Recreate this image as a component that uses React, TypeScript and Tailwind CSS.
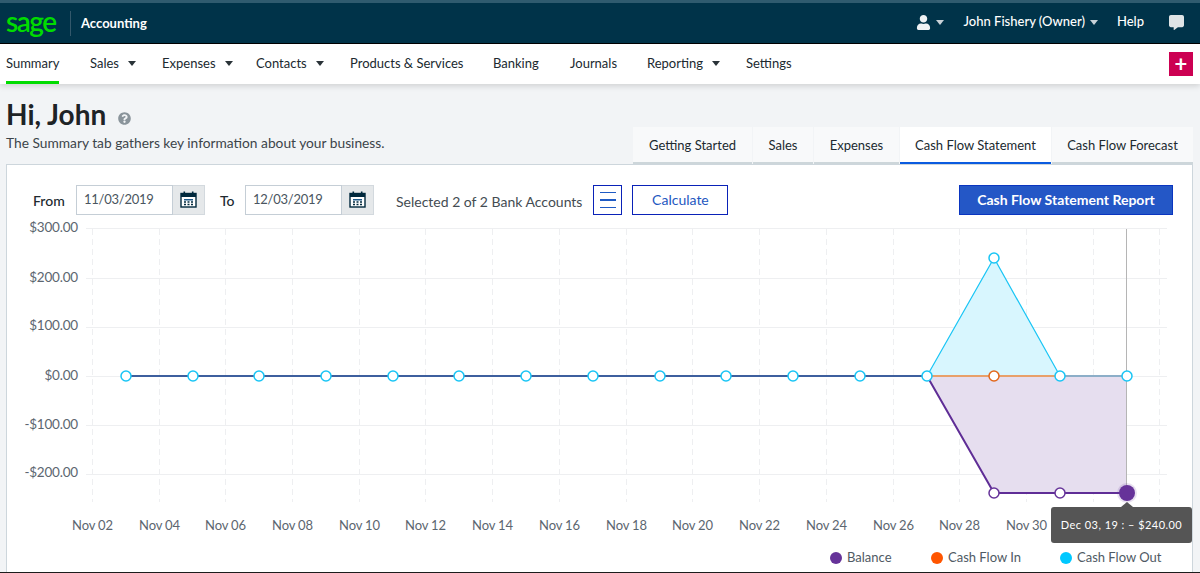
import React from "react";
import { FaUser, FaCommentAlt, FaQuestionCircle } from "react-icons/fa";

const navItems = [
  { label: "Summary", width: "w-[84px]", active: true },
  { label: "Sales", width: "w-[72px]", caret: true },
  { label: "Expenses", width: "w-[94px]", caret: true },
  { label: "Contacts", width: "w-[94px]", caret: true },
  { label: "Products & Services", width: "w-[143px]" },
  { label: "Banking", width: "w-[77px]" },
  { label: "Journals", width: "w-[77px]" },
  { label: "Reporting", width: "w-[99px]", caret: true },
  { label: "Settings", width: "w-[80px]" },
];

const tabs = [
  { label: "Getting Started", width: "w-[119px]" },
  { label: "Sales", width: "w-[60px]" },
  { label: "Expenses", width: "w-[85px]" },
  { label: "Cash Flow Statement", width: "w-[151px]", active: true },
  { label: "Cash Flow Forecast", width: "w-[141px]" },
];

const yTicks = [
  { label: "$300.00", y: 228.5, textY: 232 },
  { label: "$200.00", y: 278.5, textY: 282 },
  { label: "$100.00", y: 327.5, textY: 330 },
  { label: "$0.00", y: 376.5, textY: 380 },
  { label: "-$100.00", y: 425.5, textY: 429 },
  { label: "-$200.00", y: 474.5, textY: 477 },
];

const xLabels = [
  "Nov 02", "Nov 04", "Nov 06", "Nov 08", "Nov 10", "Nov 12", "Nov 14", "Nov 16",
  "Nov 18", "Nov 20", "Nov 22", "Nov 24", "Nov 26", "Nov 28", "Nov 30",
];

const gridX = Array.from({ length: 17 }, (_, i) => Math.floor(92.3 + i * 66.73) + 0.5);
const pointX = [126, 193, 259, 326, 393, 459, 526, 593, 660, 726, 793, 860, 927, 994, 1060, 1127];

const CalendarIcon = () => (
  <svg width="17" height="17" viewBox="0 0 17 17" className="mb-[2px]">
    <rect x="1" y="2.5" width="15" height="13.5" fill="#fff" stroke="#00293d" strokeWidth="1.4" />
    <rect x="1" y="2.5" width="15" height="3.5" fill="#00293d" />
    <rect x="3.5" y="0.5" width="1.6" height="3" fill="#00293d" />
    <rect x="11.9" y="0.5" width="1.6" height="3" fill="#00293d" />
    <rect x="4" y="8" width="9" height="1.5" fill="#1d5a8a" />
    <path d="M4 11h2M7.5 11h2M11 11h2M4 13.5h2M7.5 13.5h2M11 13.5h2" stroke="#00293d" strokeWidth="1.4" />
  </svg>
);

const DateField = ({ value }: { value: string }) => (
  <div className="flex h-[30px] w-[129px]">
    <div className="flex w-[97px] items-center border border-[#c5ced6] bg-white pl-[7px] text-[13px] tracking-[-0.25px] text-[#4a5560]">
      {value}
    </div>
    <div className="flex flex-1 items-center justify-center border border-l-0 border-[#d3d9de] bg-[#e5e8ea]">
      <CalendarIcon />
    </div>
  </div>
);

const Caret = ({ className }: { className: string }) => (
  <span className={`inline-block h-0 w-0 border-x-[4px] border-t-[5px] border-x-transparent ${className}`} />
);

const LegendItem = ({ color, label, width }: { color: string; label: string; width: string }) => (
  <div className={`flex items-center gap-[5px] ${width}`}>
    <span className={`h-3 w-3 rounded-full ${color}`} />
    <span>{label}</span>
  </div>
);

const Chart = () => (
  <svg width="1185" height="325" viewBox="7 216 1185 325" className="block">
    {yTicks.map((t) => (
      <g key={t.label}>
        <line x1="86" x2="1167" y1={t.y} y2={t.y} stroke="#eeeff1" strokeWidth="1" />
        <text x="78" y={t.textY} textAnchor="end" fontSize="13.5" letterSpacing="-0.2" fill="#5c6670">
          {t.label}
        </text>
      </g>
    ))}
    {gridX.map((x) => (
      <line key={x} x1={x} x2={x} y1="229" y2="502" stroke="#eeeff1" strokeWidth="1" strokeDasharray="6 4" />
    ))}
    {xLabels.map((l, i) => (
      <text key={l} x={gridX[i]} y="530" textAnchor="middle" fontSize="13" letterSpacing="-0.15" fill="#5c6670">
        {l}
      </text>
    ))}

    <polygon points="927,376 994,258 1060,376" fill="#d8f6fe" />
    <polygon points="927,376 994,493 1127,493 1127,376" fill="#e6deef" />
    <line x1="1126.5" x2="1126.5" y1="229" y2="493" stroke="#b5b5b5" strokeWidth="1" />

    <line x1="126" x2="927" y1="376" y2="376" stroke="#3d5f9e" strokeWidth="2" />
    <line x1="927" x2="1060" y1="376" y2="376" stroke="#e8a06a" strokeWidth="2" />
    <line x1="1060" x2="1127" y1="376" y2="376" stroke="#8caec8" strokeWidth="2" />
    <polyline points="927,376 994,258 1060,376" fill="none" stroke="#19c5f5" strokeWidth="1.2" />
    <polyline points="927,376 994,493 1127,493" fill="none" stroke="#5f2d96" strokeWidth="2" />

    {pointX.map((x) => (
      <circle
        key={x}
        cx={x}
        cy={x === 994 ? 258 : 376}
        r="5"
        fill="#fff"
        stroke="#19c5f5"
        strokeWidth="1.5"
      />
    ))}
    <circle cx="994" cy="376" r="5" fill="#fff" stroke="#e2671b" strokeWidth="1.5" />
    <circle cx="994" cy="493" r="5" fill="#fff" stroke="#663399" strokeWidth="1.5" />
    <circle cx="1060" cy="493" r="5" fill="#fff" stroke="#663399" strokeWidth="1.5" />
    <circle cx="1127" cy="493" r="10" fill="#663399" fillOpacity="0.15" />
    <circle cx="1127" cy="493" r="8" fill="#663399" />
  </svg>
);

export default function App() {
  return (
    <div className="flex h-[573px] w-[1200px] flex-col overflow-hidden bg-[#f2f4f6] [font-family:Lato,sans-serif]">
      <header className="flex h-[44px] shrink-0 items-center border-t-[3px] border-b border-t-[#2f5b6f] border-b-black bg-[#003349] text-white">
        <div className="flex w-[70px] pl-[6px]">
          <span className="pb-[5px] text-[28px] leading-none font-semibold tracking-[-1.5px] text-[#00dc00]">sage</span>
        </div>
        <div className="h-[25px] w-px bg-[#33586b]" />
        <span className="ml-[10px] pt-[2px] text-[13px] font-bold">Accounting</span>
        <div className="ml-auto flex items-center pb-[2px] text-[13px] font-medium">
          <FaUser className="text-[15px] text-[#eef2f4]" />
          <Caret className="ml-[5px] border-t-[#c8d2d8]" />
          <span className="ml-[20px]">John Fishery (Owner)</span>
          <Caret className="ml-[5px] border-t-[#c8d2d8]" />
          <span className="ml-[19px]">Help</span>
          <FaCommentAlt className="mr-[16px] ml-[25px] text-[15px] text-[#dfe4e6]" />
        </div>
      </header>

      <nav className="flex h-[40px] shrink-0 items-stretch bg-white pl-[6px] text-[13px] text-[#20292f] shadow-[0_2px_6px_rgba(0,0,0,0.15)]">
        {navItems.map((item) => (
          <div key={item.label} className={`flex items-center ${item.width}`}>
            <span
              className={`flex h-full items-center ${item.active ? "border-b-[3px] border-[#00dc00] pt-[3px]" : ""}`}
            >
              {item.label}
            </span>
            {item.caret && <Caret className="mb-[2px] ml-[9px] border-t-[#2a3338]" />}
          </div>
        ))}
        <div className="ml-auto flex items-center pr-[7px]">
          <div className="flex h-[24px] w-[24px] items-center justify-center bg-[#cc0052] text-[22px] leading-none font-bold text-white">
            +
          </div>
        </div>
      </nav>

      <div className="flex h-[80px] shrink-0 items-end justify-between pl-[6px] pr-[7px]">
        <div className="pb-[12px]">
          <div className="flex items-center">
            <h1 className="text-[28px] leading-[36px] font-bold text-[#1e2326]">Hi, John</h1>
            <FaQuestionCircle className="mt-[9px] ml-[12px] text-[13px] text-[#8a949b]" />
          </div>
          <p className="mt-[2px] text-[13.75px] leading-[18px] text-[#3c444a]">
            The Summary tab gathers key information about your business.
          </p>
        </div>
        <div className="flex h-[37px] gap-px">
          {tabs.map((tab) => (
            <div
              key={tab.label}
              className={`flex items-center justify-center border-b-2 pt-[2px] text-[13px] text-[#20292f] ${tab.width} ${
                tab.active ? "border-[#0a5be0] bg-white" : "border-[#cdd6da] bg-[#f8f9fa]"
              }`}
            >
              {tab.label}
            </div>
          ))}
        </div>
      </div>

      <main className="relative ml-[6px] mr-[7px] flex-1 border-x border-t border-x-[#cdd6dc] border-t-[#cdd6dc] bg-white">
        <div className="flex h-[50px] items-end pl-[26px] text-[14px]">
          <div className="flex h-[30px] items-center">
            <span className="w-[43px] font-medium text-[#20292f]">From</span>
            <DateField value="11/03/2019" />
            <span className="ml-[15px] w-[25px] font-medium text-[#20292f]">To</span>
            <DateField value="12/03/2019" />
            <span className="ml-[22px] pt-[3px] text-[#444c52]">Selected 2 of 2 Bank Accounts</span>
            <div className="ml-[11px] flex h-[30px] w-[29px] flex-col items-center justify-center gap-[6px] border border-[#0a22b8]">
              <span className="h-[1.5px] w-[16px] bg-[#1f5bc4]" />
              <span className="h-[1.5px] w-[16px] bg-[#1f5bc4]" />
              <span className="h-[1.5px] w-[16px] bg-[#1f5bc4]" />
            </div>
            <div className="ml-[10px] flex h-[30px] w-[96px] items-center justify-center border border-[#0a22b8] pb-[2px] text-[#2457c0]">
              Calculate
            </div>
          </div>
          <div className="ml-auto mr-[19px] flex h-[30px] w-[214px] items-center justify-center border border-[#0a35c0] bg-[#2457c6] pb-[2px] font-bold text-white">
            Cash Flow Statement Report
          </div>
        </div>

        <div className="pt-px">
          <Chart />
        </div>

        <div className="mt-[7px] flex pl-[823px] text-[13px] text-[#4f5a64]">
          <LegendItem color="bg-[#663399]" label="Balance" width="w-[101px]" />
          <LegendItem color="bg-[#ff5500]" label="Cash Flow In" width="w-[129px]" />
          <LegendItem color="bg-[#00c8ff]" label="Cash Flow Out" width="w-[110px]" />
        </div>

        <div className="absolute top-[342px] left-[1044px] h-[36px] w-[141px] rounded-[3px] bg-[#555555] text-center text-[11px] leading-[36px] tracking-[0.45px] whitespace-nowrap text-white">
          <span className="absolute -top-[5px] left-[70px] h-0 w-0 border-x-[6px] border-b-[5px] border-x-transparent border-b-[#555555]" />
          Dec 03, 19 : – $240.00
        </div>
      </main>
      <div className="h-px shrink-0 bg-[#1c1c1c]" />
    </div>
  );
}
